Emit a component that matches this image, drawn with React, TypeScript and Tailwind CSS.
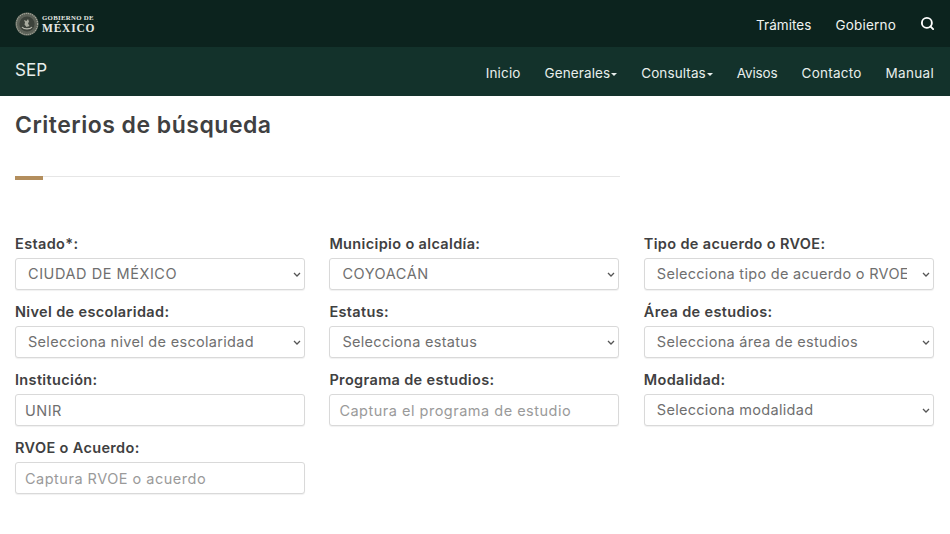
import { Search } from 'lucide-react'

const font = "font-['Inter','Liberation_Sans',sans-serif]"

function Caret() {
  return <span className="ml-[1px] inline-block border-x-[3.5px] border-t-[3.5px] border-x-transparent border-t-[#e8eeec] align-middle" />
}

function Seal() {
  return (
    <svg width="24" height="24" viewBox="0 0 24 24" className="shrink-0">
      <circle cx="12" cy="12" r="11.5" fill="#5c6158" />
      <circle cx="12" cy="12" r="10.6" fill="none" stroke="#a5a79b" strokeWidth="1.2" strokeDasharray="1.2 0.9" />
      <circle cx="12" cy="12" r="7.6" fill="#3c423b" />
      <path d="M7 15c2 2.6 8 2.6 10 0" fill="none" stroke="#b9baaf" strokeWidth="1.2" />
      <path d="M9 8l2.5 1 1.5-2 1 2.5-1 2 1.5 2.5-3 1-2-2.5 .5-2z" fill="#a8aa9e" />
    </svg>
  )
}

function Select({ label, value, caps }: { label: string; value: string; caps?: boolean }) {
  return (
    <label className="block">
      <span className="mb-[4px] block text-[14.5px] leading-[20px] font-semibold tracking-[0.35px] text-[#404041]">{label}</span>
      <span className="relative block">
        <select
          defaultValue={value}
          className={`h-[32px] w-full appearance-none rounded-[3px] border border-[#d9d9d9] bg-white pl-[12px] pr-[26px] text-[14.5px] text-[#6f6f6f] shadow-[0_1px_1px_rgba(0,0,0,0.06)] ${caps ? 'tracking-[0.55px]' : 'tracking-[0.3px]'}`}
        >
          <option>{value}</option>
        </select>
        <svg width="8" height="5" viewBox="0 0 8 5" className="pointer-events-none absolute top-[14px] right-[4px]">
          <path d="M1 1l3 3 3-3" fill="none" stroke="#555" strokeWidth="1.3" />
        </svg>
      </span>
    </label>
  )
}

function Field({ label, value, placeholder }: { label: string; value?: string; placeholder?: string }) {
  return (
    <label className="block">
      <span className="mb-[4px] block text-[14.5px] leading-[20px] font-semibold tracking-[0.35px] text-[#404041]">{label}</span>
      <input
        defaultValue={value}
        placeholder={placeholder}
        className="h-[32px] w-full rounded-[3px] border border-[#d9d9d9] bg-white px-[9px] text-[14.5px] tracking-[0.5px] text-[#6f6f6f] shadow-[0_1px_1px_rgba(0,0,0,0.06)] placeholder:text-[#9a9a9a]"
      />
    </label>
  )
}

export default function App() {
  return (
    <div className={`h-[534px] w-[950px] overflow-hidden bg-white ${font}`}>
      {/* Top bar */}
      <div className="flex h-[47px] items-center justify-between bg-[#0c231e] px-[15px]">
        <div className="flex items-center gap-[3px]">
          <Seal />
          <div className="font-['Liberation_Serif',serif] text-[#e6e8e4]">
            <div className="text-[6.8px] leading-[8px] font-bold tracking-[0.3px]">GOBIERNO DE</div>
            <div className="mt-[1px] text-[11.5px] leading-[11px] font-bold tracking-[0.8px]">MÉXICO</div>
          </div>
        </div>
        <div className="flex items-center gap-[24px] text-[13.5px] text-[#f0f3f1]">
          <span className="mt-[4px] tracking-[0.05px]">Trámites</span>
          <span className="mt-[4px] tracking-[0.2px]">Gobierno</span>
          <Search size={15} strokeWidth={3} className="mb-[1px] text-white" />
        </div>
      </div>

      {/* Sub nav */}
      <div className="flex h-[49px] items-center justify-between bg-[#13322b] pl-[15px] pr-[16px] text-[#e8eeec]">
        <span className="mb-[2px] text-[17px]">SEP</span>
        <nav className="mt-[4px] flex items-center gap-[24px] text-[13.5px]">
          <span className="tracking-[0.15px]">Inicio</span>
          <span className="tracking-[0.1px]">Generales<Caret /></span>
          <span className="tracking-[0.1px]">Consultas<Caret /></span>
          <span className="tracking-[-0.15px]">Avisos</span>
          <span className="tracking-[0.25px]">Contacto</span>
          <span className="tracking-[0.3px]">Manual</span>
        </nav>
      </div>

      {/* Content */}
      <div className="px-[15px]">
        <h1 className="mt-[13px] text-[23px] leading-[32px] font-semibold tracking-[0.5px] text-[#404041]">Criterios de búsqueda</h1>
        <div className="relative mt-[35px] h-px w-[605px] bg-[#e6e6e6]">
          <div className="absolute top-0 left-0 h-[4px] w-[28px] bg-[#b38e5d]" />
        </div>

        <div className="mt-[57px] grid grid-cols-[290px_290px_290px] gap-x-[24.4px] gap-y-[12px]">
          <Select label="Estado*:" value="CIUDAD DE MÉXICO" caps />
          <Select label="Municipio o alcaldía:" value="COYOACÁN" caps />
          <Select label="Tipo de acuerdo o RVOE:" value="Selecciona tipo de acuerdo o RVOE" />
          <Select label="Nivel de escolaridad:" value="Selecciona nivel de escolaridad" />
          <Select label="Estatus:" value="Selecciona estatus" />
          <Select label="Área de estudios:" value="Selecciona área de estudios" />
          <Field label="Institución:" value="UNIR" />
          <Field label="Programa de estudios:" placeholder="Captura el programa de estudio" />
          <Select label="Modalidad:" value="Selecciona modalidad" />
          <Field label="RVOE o Acuerdo:" placeholder="Captura RVOE o acuerdo" />
        </div>
      </div>
    </div>
  )
}
